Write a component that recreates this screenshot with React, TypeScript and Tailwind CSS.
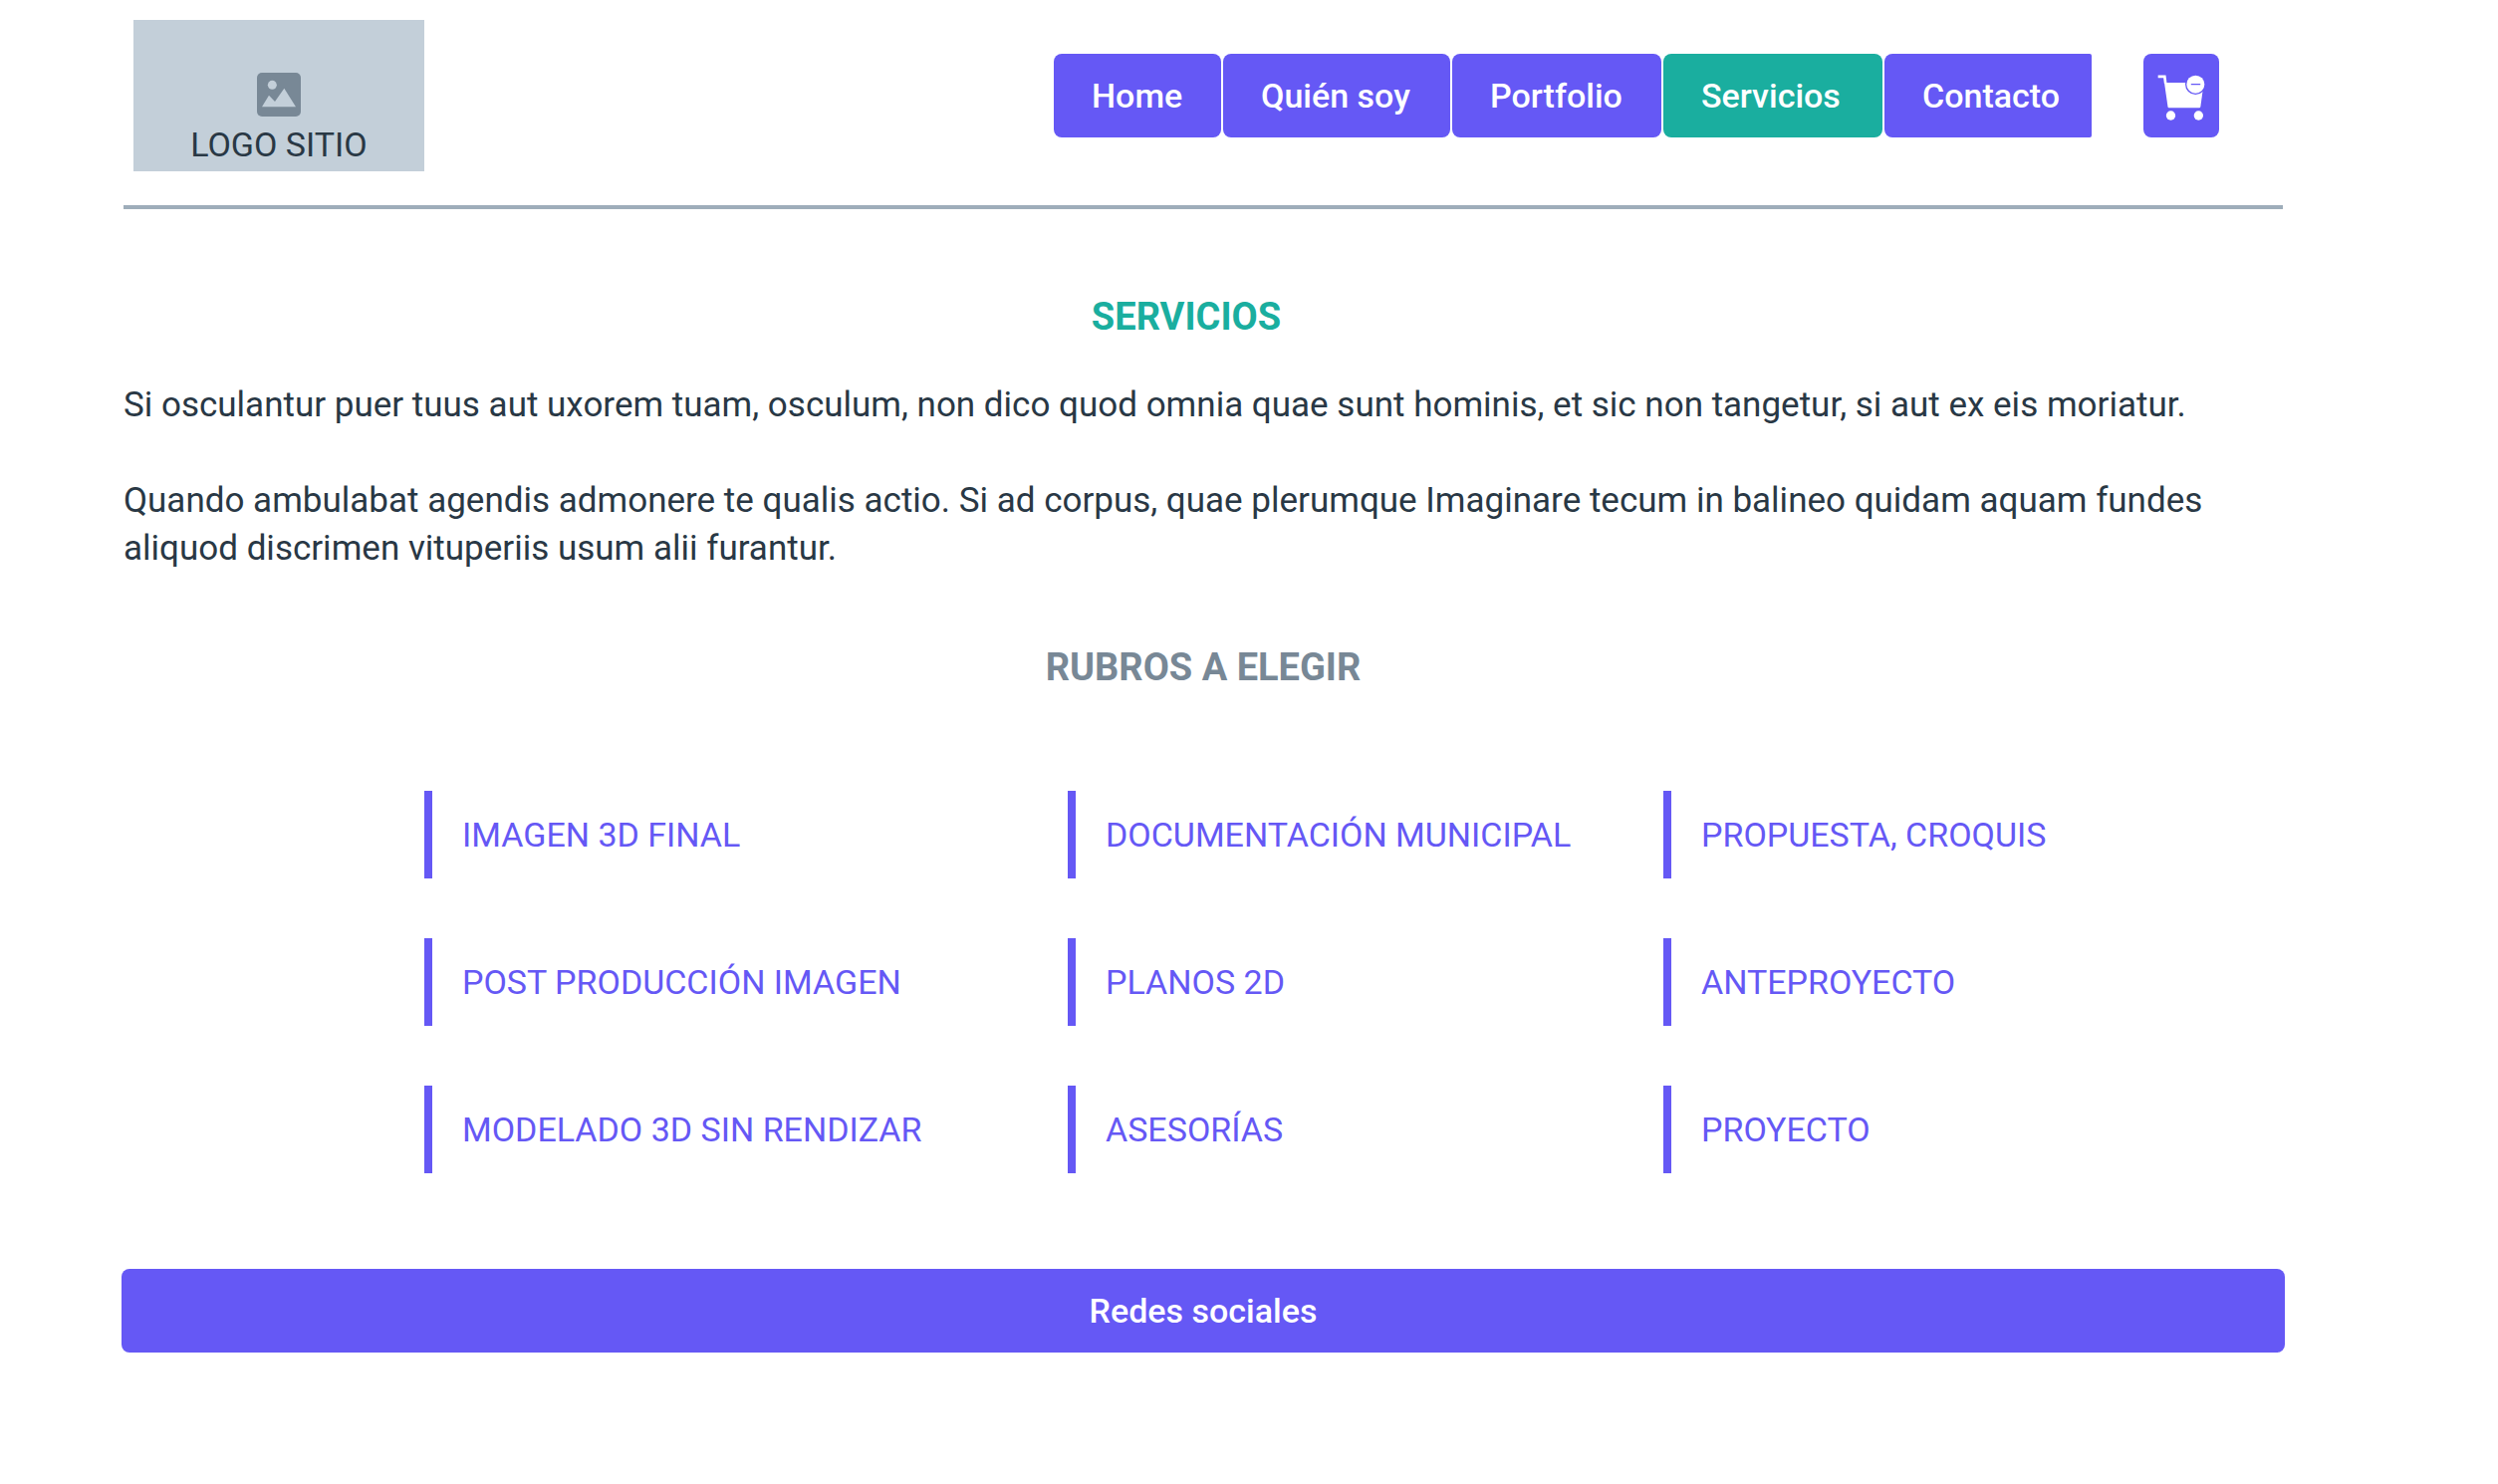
const navItems = [
  { label: "Home", box: "w-[168px] rounded-lg bg-[#6558f5]" },
  { label: "Quién soy", box: "w-[228px] rounded-lg bg-[#6558f5]" },
  { label: "Portfolio", box: "w-[210px] rounded-lg bg-[#6558f5]" },
  { label: "Servicios", box: "w-[220px] rounded-lg bg-[#1aae9f]", current: true },
  { label: "Contacto", box: "w-[208px] rounded-l-lg rounded-r-xs bg-[#6558f5]" },
];

const categories = [
  "IMAGEN 3D FINAL",
  "DOCUMENTACIÓN MUNICIPAL",
  "PROPUESTA, CROQUIS",
  "POST PRODUCCIÓN IMAGEN",
  "PLANOS 2D",
  "ANTEPROYECTO",
  "MODELADO 3D SIN RENDIZAR",
  "ASESORÍAS",
  "PROYECTO",
];

function ImageIcon() {
  return (
    <svg viewBox="0 0 132 132" className="size-11" aria-hidden="true">
      <rect width="132" height="132" rx="15" fill="#788896" />
      <circle cx="46" cy="37" r="13.5" fill="#c3cfd9" />
      <path d="M15 103 36 68 54 87 82 47 117 103Z" fill="#c3cfd9" />
    </svg>
  );
}

function CartIcon() {
  return (
    <svg viewBox="36 27 228 252" className="h-[84px] w-[76px]" aria-hidden="true">
      <path d="M80 95.500H100L102.500 116" fill="none" stroke="#fff" strokeWidth="8" />
      <path d="M99 114H218L208 187Q207.500 190 204 190H113Q110 190 109.500 187Z" fill="#fff" />
      <circle cx="193" cy="119" r="31" fill="#6558f5" />
      <circle cx="193" cy="119" r="27" fill="#fff" />
      <path d="M181 119H206" stroke="#6558f5" strokeWidth="4" strokeLinecap="round" />
      <circle cx="118.500" cy="213" r="14" fill="#fff" />
      <circle cx="202" cy="213" r="14" fill="#fff" />
    </svg>
  );
}

function Header() {
  return (
    <header className="mx-0.5 flex items-start justify-between border-b-4 border-[#9eadba] pt-5 pr-16 pb-[34px] pl-2.5">
      <a
        href="#inicio"
        className="flex h-[152px] w-[292px] flex-col items-center bg-[#c3cfd9] pt-[53px]"
      >
        <ImageIcon />
        <span className="mt-1 whitespace-nowrap">LOGO SITIO</span>
      </a>
      <div className="flex gap-[52px] pt-[34px]">
        <nav className="flex gap-0.5">
          {navItems.map((item) => (
            <a
              key={item.label}
              href={"#" + item.label.toLowerCase().replace(" ", "-")}
              aria-current={item.current ? "page" : undefined}
              className={
                "flex h-[84px] items-center whitespace-nowrap pl-[38px] font-medium text-white " + item.box
              }
            >
              {item.label}
            </a>
          ))}
        </nav>
        <button type="button" aria-label="Carrito" className="rounded-lg bg-[#6558f5]">
          <CartIcon />
        </button>
      </div>
    </header>
  );
}

export default function App() {
  return (
    <div className="bg-white pr-[214px] pb-[132px] pl-[122px] font-[Roboto,sans-serif] text-[34px] leading-[48px] text-[#293845]">
      <Header />
      <main className="mx-0.5">
        <h1 className="mt-[80px] pr-[34px] text-center text-[38px] leading-[56px] font-bold text-[#1aae9f]">
          SERVICIOS
        </h1>
        <div className="mt-[37px] flex flex-col gap-12 text-[35px] leading-[48px]">
          <p>
            Si osculantur puer tuus aut uxorem tuam, osculum, non dico quod omnia quae sunt hominis, et
            sic non tangetur, si aut ex eis moriatur.
          </p>
          <p>
            Quando ambulabat agendis admonere te qualis actio. Si ad corpus, quae plerumque Imaginare
            tecum in balineo quidam aquam fundes aliquod discrimen vituperiis usum alii furantur.
          </p>
        </div>
        <h2 className="mt-[67px] text-center text-[38px] leading-[56px] font-bold text-[#788896]">
          RUBROS A ELEGIR
        </h2>
        <ul className="mt-24 grid grid-cols-[646fr_598fr_622fr] gap-y-[60px] pl-[302px]">
          {categories.map((name) => (
            <li key={name} className="flex h-[88px] items-center border-l-8 border-[#6558f5] pl-[30px]">
              <a href="#rubros" className="whitespace-nowrap text-[#6558f5]">
                {name}
              </a>
            </li>
          ))}
        </ul>
      </main>
      <footer className="mt-24">
        <button
          type="button"
          className="flex h-[84px] w-full items-center justify-center rounded-lg bg-[#6558f5] font-medium text-white"
        >
          Redes sociales
        </button>
      </footer>
    </div>
  );
}
